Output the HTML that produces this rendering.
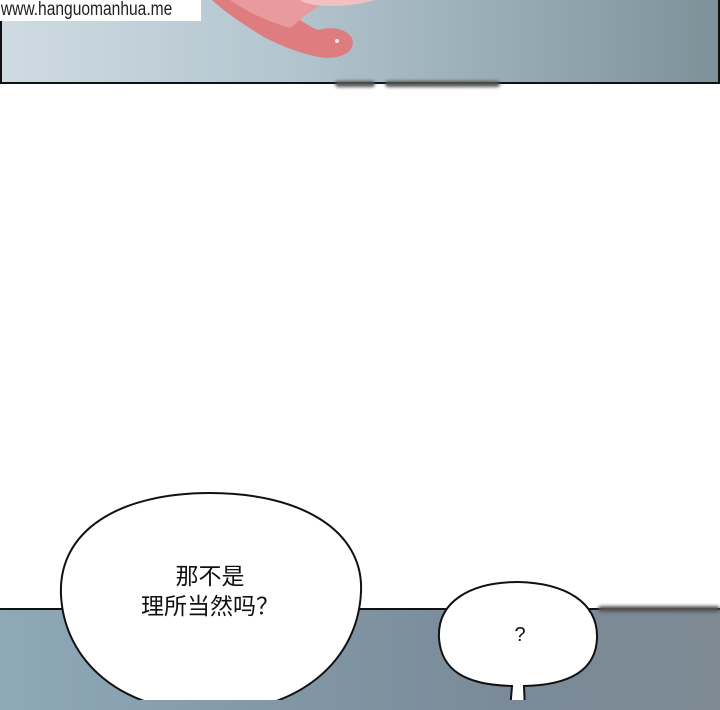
<!DOCTYPE html>
<html><head><meta charset="utf-8"><style>
body{margin:0;width:720px;height:700px;overflow:hidden;background:#fff;position:relative;font-family:"Liberation Sans","Noto Sans CJK SC",sans-serif}
.p1{position:absolute;left:0;top:-2px;width:716px;height:82px;border:2px solid #111;background:linear-gradient(90deg,#cfdbe2 0%,#b3c5cf 40%,#93a8b1 75%,#7c9299 100%)}
.p2{position:absolute;left:0;top:608px;width:720px;height:100px;border-top:2px solid #111;background:linear-gradient(90deg,#8fa9b8 0%,#8197a6 40%,#7a8a98 70%,#7d8a94 100%)}
.wm{position:absolute;left:0;top:0;width:201px;height:21px;background:#fff}
.wm span{display:inline-block;font-size:19px;color:#222;line-height:20px;transform:scaleX(0.82);transform-origin:0 0;white-space:nowrap;padding-left:1px}
.blur{position:absolute;height:6px;background:#555;filter:blur(1.5px);border-radius:3px}
.t{position:absolute;text-align:center;font-size:23px;color:#111;line-height:30px}
</style></head><body>
<div class="p1"></div>
<svg style="position:absolute;left:0;top:0" width="720" height="80">
<path d="M212 0 C225 12 240 22 262 36 C285 48 305 55 325 58 C345 58 356 50 352 38 C346 28 330 26 318 30 C300 22 290 12 275 0 Z" fill="#dd7d80"/>
<path d="M230 0 C250 14 270 22 290 28 C300 20 310 10 330 0 Z" fill="#e99a9c"/>
<path d="M300 0 C310 8 350 8 375 0 Z" fill="#f2c0c2"/>
<circle cx="337" cy="41" r="2" fill="#fff" opacity="0.8"/>
</svg>
<div class="wm"><span>www.hanguomanhua.me</span></div>
<div class="blur" style="left:335px;top:81px;width:40px"></div>
<div class="blur" style="left:385px;top:81px;width:115px"></div>
<div class="p2"></div>
<div class="blur" style="left:598px;top:606px;width:122px"></div>
<svg style="position:absolute;left:0;top:480px" width="720" height="220">
<path d="M61 115 C58 50 120 13 210 13 C300 13 364 50 361 112 C358 180 300 232 210 232 C120 232 64 180 61 115 Z" fill="#fff" stroke="#111" stroke-width="2"/>
<path d="M439 158 C437 122 470 102 518 102 C565 103 598 122 597 158 C596 190 570 205 524 206 L525 230 L510 230 L512 206 C465 205 441 190 439 158 Z" fill="#fff" stroke="#111" stroke-width="2"/>
<path d="M513 203 L523 203" stroke="#fff" stroke-width="3"/>
</svg>
<div class="t" style="left:110px;top:561px;width:200px">那不是<br>理所当然吗？</div>
<div class="t" style="left:500px;top:620px;width:40px;font-size:20px">?</div>
</body></html>
